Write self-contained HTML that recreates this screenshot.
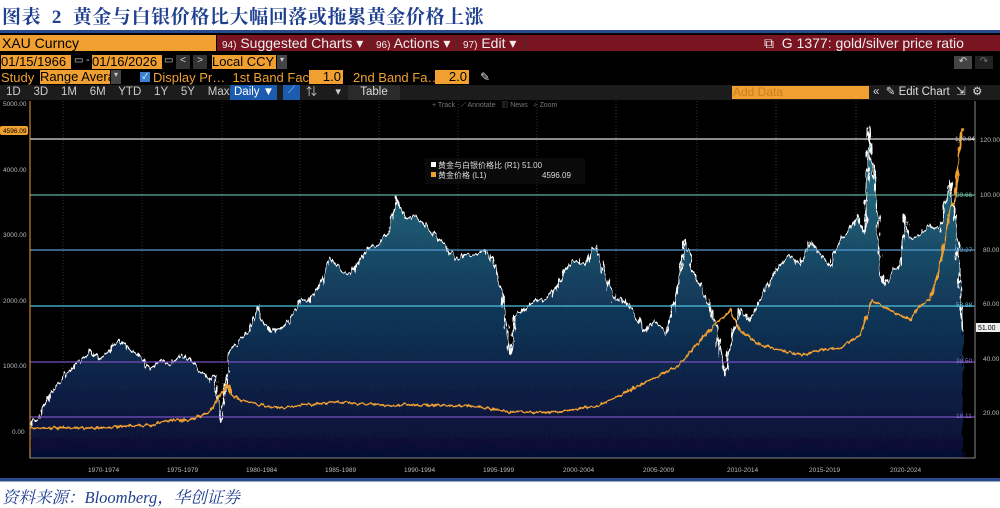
<!DOCTYPE html>
<html><head><meta charset="utf-8">
<style>
*{margin:0;padding:0;box-sizing:border-box}
body{width:1000px;height:506px;background:#fff;position:relative;overflow:hidden;font-family:"Liberation Sans","Noto Sans CJK SC",sans-serif}
.a{position:absolute;white-space:nowrap}
.title{left:2px;top:2px;font-family:"Liberation Serif","Noto Serif CJK SC",serif;font-weight:bold;font-size:19px;color:#1f3f8f;letter-spacing:0.6px}
.blk{left:0;top:33px;width:1000px;height:446px;background:#000}
.or{background:#f0a030;color:#000}
.t{font-size:13px;color:#f0a030}
.w{color:#ddd}
.cap{left:2px;top:484px;font-family:"Liberation Serif","Noto Serif CJK SC",serif;font-style:italic;font-size:16.5px;color:#1f3f8f}
</style></head><body>
<div class="a title">图表&nbsp; 2&nbsp; 黄金与白银价格比大幅回落或拖累黄金价格上涨</div>
<div class="a" style="left:0;top:30px;width:1000px;height:3px;background:#2a4a90"></div>
<div class="a blk"></div>
<div class="a or" style="left:0;top:35px;width:216px;height:16px;font-size:14px;line-height:16px;padding-left:2px">XAU Curncy</div>
<div class="a" style="left:217px;top:35px;width:783px;height:16px;background:#7a1420"></div>
<div class="a" style="left:222px;top:35px;font-size:14px;line-height:16px;color:#eee"><span style="font-size:10px">94)</span> Suggested Charts ▾</div>
<div class="a" style="left:370px;top:35px;height:16px;border-left:1px solid #333"></div>
<div class="a" style="left:376px;top:35px;font-size:14px;line-height:16px;color:#eee"><span style="font-size:10px">96)</span> Actions ▾</div>
<div class="a" style="left:457px;top:35px;height:16px;border-left:1px solid #333"></div>
<div class="a" style="left:463px;top:35px;font-size:14px;line-height:16px;color:#eee"><span style="font-size:10px">97)</span> Edit ▾</div>
<div class="a" style="left:525px;top:35px;height:16px;border-left:1px solid #333"></div>
<div class="a" style="left:764px;top:35px;font-size:14px;line-height:16px;color:#eee">⧉&nbsp; G 1377: gold/silver price ratio</div>
<div class="a or" style="left:1px;top:55px;width:70px;height:14px;font-size:13px;line-height:14px">01/15/1966</div>
<div class="a w" style="left:74px;top:55px;font-size:10px">▭ -</div>
<div class="a or" style="left:92px;top:55px;width:70px;height:14px;font-size:13px;line-height:14px">01/16/2026</div>
<div class="a w" style="left:164px;top:55px;font-size:10px">▭</div>
<div class="a" style="left:176px;top:55px;width:14px;height:14px;background:#333;color:#ccc;font-size:10px;text-align:center">&lt;</div>
<div class="a" style="left:193px;top:55px;width:14px;height:14px;background:#333;color:#ccc;font-size:10px;text-align:center">&gt;</div>
<div class="a or" style="left:212px;top:55px;width:64px;height:14px;font-size:13px;line-height:14px">Local CCY</div>
<div class="a" style="left:277px;top:55px;width:10px;height:14px;background:#444;color:#ccc;font-size:8px;text-align:center">▾</div>
<div class="a" style="left:954px;top:56px;width:18px;height:13px;background:#444;color:#ddd;font-size:10px;text-align:center">↶</div>
<div class="a" style="left:975px;top:56px;width:18px;height:13px;background:#222;color:#777;font-size:10px;text-align:center">↷</div>
<div class="a t" style="left:1px;top:70px">Study</div>
<div class="a or" style="left:40px;top:70px;width:70px;height:14px;font-size:13px;line-height:14px">Range Avera</div>
<div class="a" style="left:111px;top:70px;width:10px;height:14px;background:#444;color:#ccc;font-size:8px;text-align:center">▾</div>
<div class="a" style="left:140px;top:72px;width:10px;height:10px;background:#3a7fd0;color:#fff;font-size:8px;line-height:10px;text-align:center">✓</div>
<div class="a t" style="left:153px;top:70px">Display Pr…&nbsp; 1st Band Fac…</div>
<div class="a or" style="left:309px;top:70px;width:34px;height:14px;font-size:13px;line-height:14px;text-align:right;padding-right:2px">1.0</div>
<div class="a t" style="left:353px;top:70px">2nd Band Fa…</div>
<div class="a or" style="left:435px;top:70px;width:34px;height:14px;font-size:13px;line-height:14px;text-align:right;padding-right:2px">2.0</div>
<div class="a w" style="left:480px;top:70px;font-size:12px">✎</div>
<div class="a" style="left:0;top:85px;width:1000px;height:15px;background:#1c1c1c"></div>
<div class="a" style="left:6px;top:85px;font-size:11.5px;line-height:15px;color:#ccc">1D&nbsp;&nbsp;&nbsp; 3D&nbsp;&nbsp;&nbsp; 1M&nbsp;&nbsp;&nbsp; 6M&nbsp;&nbsp;&nbsp; YTD&nbsp;&nbsp;&nbsp; 1Y&nbsp;&nbsp;&nbsp; 5Y&nbsp;&nbsp;&nbsp; Max</div>
<div class="a" style="left:230px;top:85px;width:47px;height:15px;background:#1c5cb0;color:#fff;font-size:11.5px;line-height:15px;padding-left:4px">Daily ▼</div>
<div class="a" style="left:283px;top:85px;width:17px;height:15px;background:#1c5cb0;color:#9cf;font-size:10px;text-align:center">⟋</div>
<div class="a" style="left:306px;top:85px;color:#ccc;font-size:11px;line-height:15px">⇅&nbsp;&nbsp;&nbsp;&nbsp;&nbsp; ▾</div>
<div class="a" style="left:348px;top:85px;width:52px;height:15px;background:#2a2a2a;color:#ddd;font-size:11.5px;line-height:15px;text-align:center">Table</div>
<div class="a or" style="left:732px;top:86px;width:137px;height:13px;font-size:12px;line-height:13px;color:#c88020;padding-left:1px">Add Data</div>
<div class="a w" style="left:873px;top:85px;font-size:11.5px;line-height:15px">«&nbsp; ✎ Edit Chart&nbsp; ⇲&nbsp; ⚙</div>
<div class="a" style="left:432px;top:100px;font-size:7px;color:#777">+ Track&nbsp;&nbsp; ⟋ Annotate&nbsp;&nbsp; ▥ News&nbsp;&nbsp; ⌕ Zoom</div>
<svg class="a" style="left:0;top:0" width="1000" height="506" viewBox="0 0 1000 506">
<defs><linearGradient id="g" x1="0" y1="0" x2="0" y2="1"><stop offset="0" stop-color="#2a7a8a"/><stop offset="0.5" stop-color="#123a5a"/><stop offset="1" stop-color="#050830"/></linearGradient>
<filter id="n" x="-5%" y="-10%" width="110%" height="120%"><feTurbulence type="fractalNoise" baseFrequency="0.35 0.08" numOctaves="2" seed="4"/><feDisplacementMap in="SourceGraphic" scale="9" xChannelSelector="R" yChannelSelector="G"/></filter>
<filter id="n2" x="-5%" y="-10%" width="110%" height="120%"><feTurbulence type="fractalNoise" baseFrequency="0.3 0.1" numOctaves="2" seed="9"/><feDisplacementMap in="SourceGraphic" scale="5" xChannelSelector="R" yChannelSelector="G"/></filter>
</defs>
<g stroke="#333" stroke-dasharray="1,2" stroke-width="1">
<path d="M63 101V458M142 101V458M222 101V458M300 101V458M379 101V458M458 101V458M537 101V458M616 101V458M697 101V458M776 101V458M856 101V458M935 101V458"/>
</g>
<g filter="url(#n)">
<path fill="url(#g)" d="M30 470 L30 425 L40 415 L50 395 L60 380 L70 370 L80 360 L90 350 L100 360 L110 350 L120 340 L130 350 L140 355 L150 370 L160 360 L170 365 L180 355 L190 360 L200 370 L210 380 L215 375 L220 420 L225 395 L230 350 L240 340 L250 330 L258 305 L262 320 L270 330 L280 330 L290 320 L300 300 L310 300 L320 285 L330 258 L340 270 L350 275 L360 260 L370 245 L380 245 L390 225 L397 198 L405 220 L415 215 L425 225 L435 235 L445 245 L455 260 L465 255 L475 255 L485 250 L495 265 L505 310 L510 355 L515 315 L525 310 L535 300 L545 300 L555 290 L565 270 L575 260 L585 265 L595 245 L605 275 L615 300 L625 300 L635 315 L645 330 L655 320 L665 335 L675 300 L685 240 L695 275 L705 295 L715 320 L720 350 L725 375 L730 345 L740 310 L750 320 L760 300 L770 280 L780 265 L790 255 L800 265 L810 240 L820 255 L830 265 L840 240 L850 230 L857 215 L865 235 L869 128 L872 160 L876 195 L880 275 L885 285 L890 275 L900 265 L905 215 L910 240 L920 235 L930 225 L940 230 L950 182 L955 215 L958 250 L963 330 L963 470 Z"/>
<path fill="none" stroke="#fff" stroke-width="1.5" stroke-linejoin="round" d="M30 425 L40 415 L50 395 L60 380 L70 370 L80 360 L90 350 L100 360 L110 350 L120 340 L130 350 L140 355 L150 370 L160 360 L170 365 L180 355 L190 360 L200 370 L210 380 L215 375 L220 420 L225 395 L230 350 L240 340 L250 330 L258 305 L262 320 L270 330 L280 330 L290 320 L300 300 L310 300 L320 285 L330 258 L340 270 L350 275 L360 260 L370 245 L380 245 L390 225 L397 198 L405 220 L415 215 L425 225 L435 235 L445 245 L455 260 L465 255 L475 255 L485 250 L495 265 L505 310 L510 355 L515 315 L525 310 L535 300 L545 300 L555 290 L565 270 L575 260 L585 265 L595 245 L605 275 L615 300 L625 300 L635 315 L645 330 L655 320 L665 335 L675 300 L685 240 L695 275 L705 295 L715 320 L720 350 L725 375 L730 345 L740 310 L750 320 L760 300 L770 280 L780 265 L790 255 L800 265 L810 240 L820 255 L830 265 L840 240 L850 230 L857 215 L865 235 L869 128 L872 160 L876 195 L880 275 L885 285 L890 275 L900 265 L905 215 L910 240 L920 235 L930 225 L940 230 L950 182 L955 215 L958 250 L963 330"/>
</g>
<rect x="0" y="458" width="975" height="20" fill="#000"/>
<g stroke-width="1.3">
<path d="M30 139H975" stroke="#ddd"/>
<path d="M30 195H975" stroke="#5fb0a0"/>
<path d="M30 250H975" stroke="#5a9ad0"/>
<path d="M30 306H975" stroke="#50c0e0"/>
<path d="M30 362H975" stroke="#7a50c0"/>
<path d="M30 417H975" stroke="#7a50c0"/>
</g>
<path filter="url(#n2)" fill="none" stroke="#f0a030" stroke-width="1.8" stroke-linejoin="round" d="M30 428 L100 428 L150 425 L170 420 L190 420 L210 412 L220 395 L228 385 L232 395 L240 400 L260 405 L280 408 L300 405 L340 402 L380 405 L440 405 L480 407 L510 412 L560 412 L600 405 L640 385 L680 365 L700 340 L720 320 L730 310 L740 330 L760 345 L780 350 L800 355 L820 350 L840 348 L860 335 L872 300 L880 305 L890 310 L900 315 L910 320 L920 305 L930 300 L940 265 L950 210 L955 200 L960 140 L963 128"/>
<path d="M30 101V458H975V101" fill="none" stroke="#888" stroke-width="1"/>
<path d="M30 101V458" stroke="#f0a030" stroke-width="1"/>
<g font-size="6.5" fill="#bbb" font-family="Liberation Sans,sans-serif">
<text x="3" y="106">5000.00</text><text x="3" y="172">4000.00</text><text x="3" y="237">3000.00</text><text x="3" y="303">2000.00</text><text x="3" y="368">1000.00</text><text x="12" y="434">0.00</text>
<text x="980" y="142">120.00</text><text x="980" y="197">100.00</text><text x="983" y="252">80.00</text><text x="983" y="306">60.00</text><text x="983" y="361">40.00</text><text x="983" y="415">20.00</text>
<text x="88" y="472">1970-1974</text><text x="167" y="472">1975-1979</text><text x="246" y="472">1980-1984</text><text x="325" y="472">1985-1989</text><text x="404" y="472">1990-1994</text><text x="483" y="472">1995-1999</text><text x="563" y="472">2000-2004</text><text x="643" y="472">2005-2009</text><text x="727" y="472">2010-2014</text><text x="809" y="472">2015-2019</text><text x="890" y="472">2020-2024</text>
<text x="955" y="141" fill="#ccc">120.04</text><text x="956" y="197" fill="#6fc0a0">99.66</text><text x="956" y="252" fill="#6aaad0">79.27</text><text x="956" y="307" fill="#60c0e0">58.88</text><text x="956" y="363" fill="#9070d0">38.50</text><text x="956" y="418" fill="#9070d0">18.11</text>
</g>
<rect x="0" y="126" width="28" height="9" rx="2" fill="#f0a030"/><text x="3" y="133" font-size="6.5" fill="#000">4596.09</text>
<rect x="976" y="323" width="24" height="9" fill="#eee"/><text x="978" y="330" font-size="7" fill="#000">51.00</text>
<rect x="425" y="158" width="160" height="26" fill="#111" opacity="0.6"/>
<rect x="431" y="162" width="5" height="5" fill="#fff"/><rect x="431" y="172" width="5" height="5" fill="#f0a030"/>
<g font-size="8" fill="#ddd" font-family="Liberation Sans,Noto Sans CJK SC,sans-serif"><text x="438" y="168">黄金与白银价格比 (R1) 51.00</text><text x="438" y="178">黄金价格 (L1)</text><text x="542" y="178">4596.09</text></g>
</svg>
<div class="a" style="left:0;top:478px;width:1000px;height:4px;background:#2a4a90;border-bottom:1px solid #9ab"></div>
<div class="a cap">资料来源：Bloomberg，华创证券</div>
</body></html>
